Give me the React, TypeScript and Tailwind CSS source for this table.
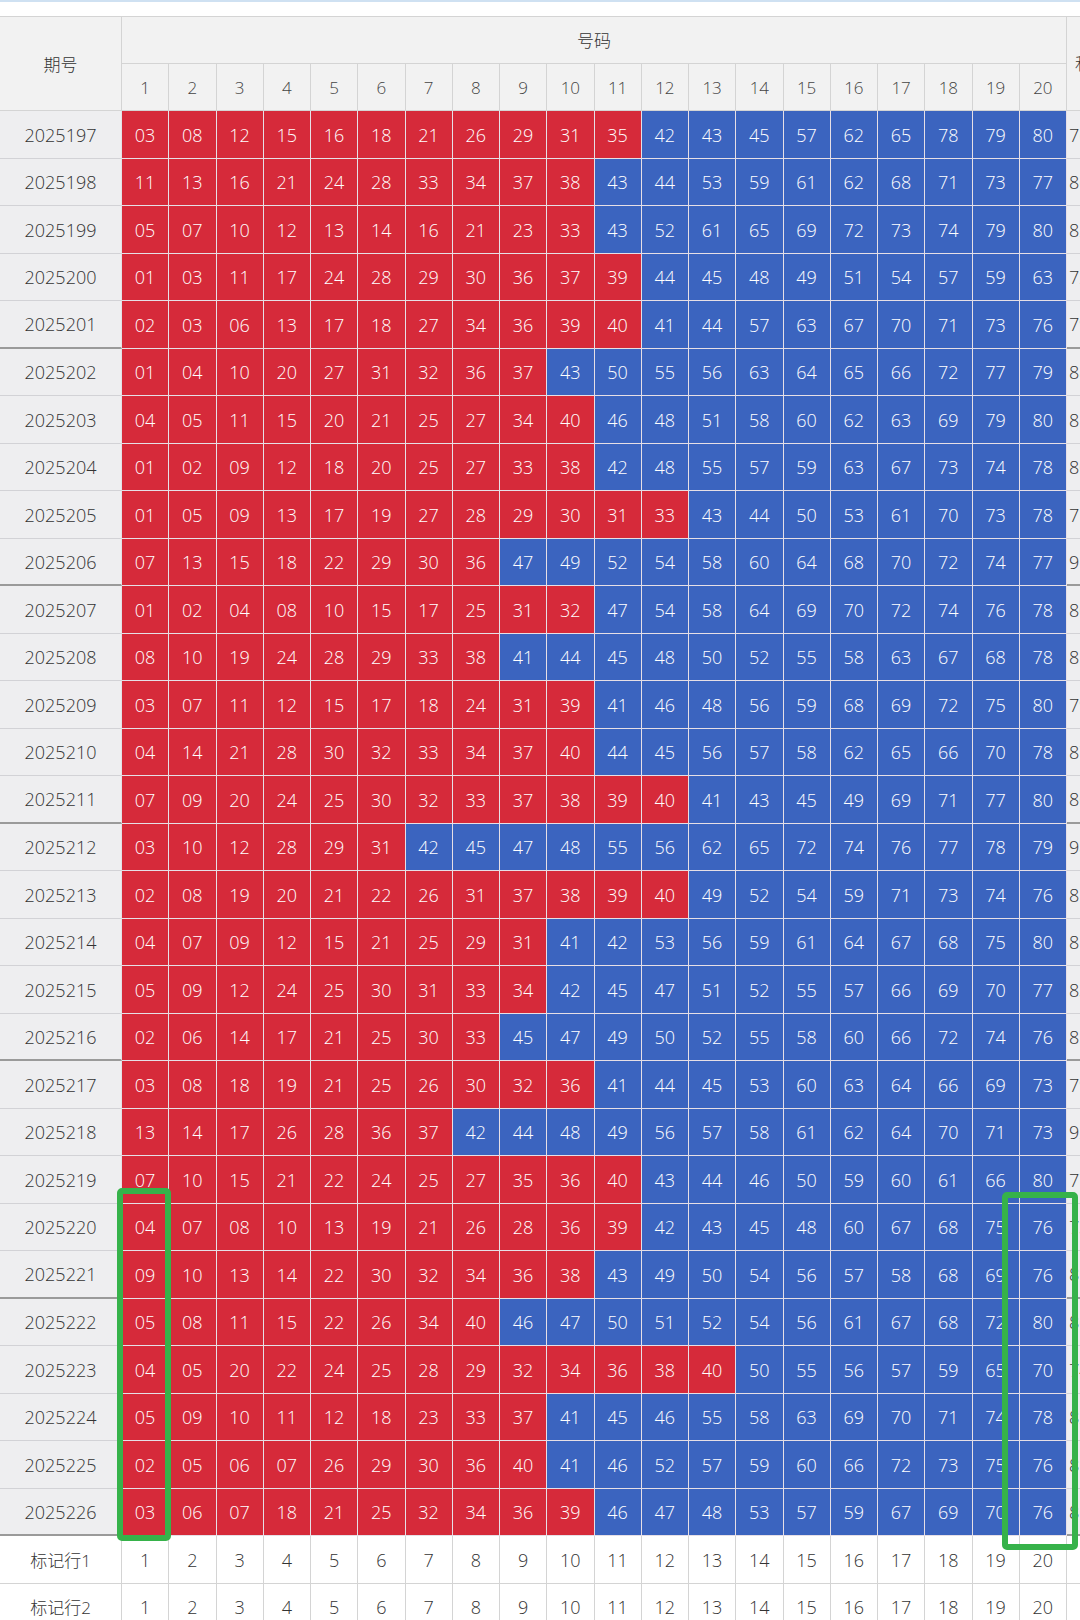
import React from 'react';

const rows: [string, string][] = [
  ['2025197', '03 08 12 15 16 18 21 26 29 31 35 42 43 45 57 62 65 78 79 80'],
  ['2025198', '11 13 16 21 24 28 33 34 37 38 43 44 53 59 61 62 68 71 73 77'],
  ['2025199', '05 07 10 12 13 14 16 21 23 33 43 52 61 65 69 72 73 74 79 80'],
  ['2025200', '01 03 11 17 24 28 29 30 36 37 39 44 45 48 49 51 54 57 59 63'],
  ['2025201', '02 03 06 13 17 18 27 34 36 39 40 41 44 57 63 67 70 71 73 76'],
  ['2025202', '01 04 10 20 27 31 32 36 37 43 50 55 56 63 64 65 66 72 77 79'],
  ['2025203', '04 05 11 15 20 21 25 27 34 40 46 48 51 58 60 62 63 69 79 80'],
  ['2025204', '01 02 09 12 18 20 25 27 33 38 42 48 55 57 59 63 67 73 74 78'],
  ['2025205', '01 05 09 13 17 19 27 28 29 30 31 33 43 44 50 53 61 70 73 78'],
  ['2025206', '07 13 15 18 22 29 30 36 47 49 52 54 58 60 64 68 70 72 74 77'],
  ['2025207', '01 02 04 08 10 15 17 25 31 32 47 54 58 64 69 70 72 74 76 78'],
  ['2025208', '08 10 19 24 28 29 33 38 41 44 45 48 50 52 55 58 63 67 68 78'],
  ['2025209', '03 07 11 12 15 17 18 24 31 39 41 46 48 56 59 68 69 72 75 80'],
  ['2025210', '04 14 21 28 30 32 33 34 37 40 44 45 56 57 58 62 65 66 70 78'],
  ['2025211', '07 09 20 24 25 30 32 33 37 38 39 40 41 43 45 49 69 71 77 80'],
  ['2025212', '03 10 12 28 29 31 42 45 47 48 55 56 62 65 72 74 76 77 78 79'],
  ['2025213', '02 08 19 20 21 22 26 31 37 38 39 40 49 52 54 59 71 73 74 76'],
  ['2025214', '04 07 09 12 15 21 25 29 31 41 42 53 56 59 61 64 67 68 75 80'],
  ['2025215', '05 09 12 24 25 30 31 33 34 42 45 47 51 52 55 57 66 69 70 77'],
  ['2025216', '02 06 14 17 21 25 30 33 45 47 49 50 52 55 58 60 66 72 74 76'],
  ['2025217', '03 08 18 19 21 25 26 30 32 36 41 44 45 53 60 63 64 66 69 73'],
  ['2025218', '13 14 17 26 28 36 37 42 44 48 49 56 57 58 61 62 64 70 71 73'],
  ['2025219', '07 10 15 21 22 24 25 27 35 36 40 43 44 46 50 59 60 61 66 80'],
  ['2025220', '04 07 08 10 13 19 21 26 28 36 39 42 43 45 48 60 67 68 75 76'],
  ['2025221', '09 10 13 14 22 30 32 34 36 38 43 49 50 54 56 57 58 68 69 76'],
  ['2025222', '05 08 11 15 22 26 34 40 46 47 50 51 52 54 56 61 67 68 72 80'],
  ['2025223', '04 05 20 22 24 25 28 29 32 34 36 38 40 50 55 56 57 59 65 70'],
  ['2025224', '05 09 10 11 12 18 23 33 37 41 45 46 55 58 63 69 70 71 74 78'],
  ['2025225', '02 05 06 07 26 29 30 36 40 41 46 52 57 59 60 66 72 73 75 76'],
  ['2025226', '03 06 07 18 21 25 32 34 36 39 46 47 48 53 57 59 67 69 70 76'],
];

const cols = Array.from({ length: 20 }, (_, i) => i + 1);
const font = { fontFamily: '"Open Sans", "Noto Sans", "Noto Sans CJK SC", sans-serif' };

export default function App() {
  return (
    <div className="relative w-[1080px] h-[1620px] overflow-hidden bg-white text-[#333] font-light" style={font}>
      <div className="h-[2px] bg-[#cfe1f2]" />
      <div className="h-[14px]" />
      <div className="grid w-[1147px] grid-cols-[122px_repeat(20,47.25px)_80px] grid-rows-[48px_47px_repeat(32,47.5px)] text-[18px]">
        {/* header */}
        <div className="row-span-2 flex items-center justify-center pt-[2px] border-t border-r border-b border-[#d4d4d4] bg-[#f2f2f2] text-[17px] text-[#333]">
          期号
        </div>
        <div className="col-span-20 flex items-center justify-center pt-[2px] border-t border-r border-b border-[#d4d4d4] bg-[#f2f2f2] text-[17px] text-[#333]">
          号码
        </div>
        <div className="row-span-2 flex items-center justify-start pl-2 border-t border-b border-[#d4d4d4] bg-[#f2f2f2] text-[17px] text-[#333]">
          和值
        </div>
        {cols.map((c) => (
          <div
            key={`h${c}`}
            className="flex items-center justify-center pt-[2px] border-r border-b border-[#d4d4d4] bg-[#f2f2f2] text-[17px] text-[#444]"
          >
            {c}
          </div>
        ))}

        {/* data */}
        {rows.map(([issue, nums], ri) => {
          const list = nums.split(' ');
          const sum = list.reduce((a, n) => a + Number(n), 0);
          const sep = (ri + 1) % 5 === 0;
          return (
            <React.Fragment key={issue}>
              <div
                className={
                  'flex items-center justify-center pt-[2px] border-r bg-[#eeeef0] text-[#333] border-r-[#e2e2e6] ' +
                  (sep ? 'border-b-2 border-b-[#9a9a9a]' : 'border-b border-b-[#d2d2d6]')
                }
              >
                {issue}
              </div>
              {list.map((n, ci) => (
                <div
                  key={ci}
                  className={
                    'flex items-center justify-center pt-[2px] border-r border-b border-[#e6dfe6] text-white ' +
                    (Number(n) <= 40 ? 'bg-[#d62a3a]' : 'bg-[#3b64bf]')
                  }
                >
                  {n}
                </div>
              ))}
              <div
                className={
                  'flex items-center justify-start pl-[2px] pt-[2px] bg-[#eeeef0] text-[#333] ' +
                  (sep ? 'border-b-2 border-b-[#9a9a9a]' : 'border-b border-b-[#d2d2d6]')
                }
              >
                {sum}
              </div>
            </React.Fragment>
          );
        })}

        {/* marker rows */}
        {['标记行1', '标记行2'].map((label) => (
          <React.Fragment key={label}>
            <div className="flex items-center justify-center pt-[2px] border-r border-b border-[#d4d4d4] bg-white text-[17px] text-[#333]">
              {label}
            </div>
            {cols.map((c) => (
              <div
                key={c}
                className="flex items-center justify-center pt-[2px] border-r border-b border-[#d4d4d4] bg-white text-[#333]"
              >
                {c}
              </div>
            ))}
            <div className="border-b border-[#d4d4d4] bg-white" />
          </React.Fragment>
        ))}
      </div>

      {/* highlight boxes */}
      <div className="absolute left-[117px] top-[1188px] w-[54px] h-[353px] rounded-[5px] border-[6px] border-[#36b24a]" />
      <div className="absolute left-[1002px] top-[1192px] w-[76px] h-[358px] rounded-[5px] border-[6px] border-[#36b24a]" />
    </div>
  );
}
